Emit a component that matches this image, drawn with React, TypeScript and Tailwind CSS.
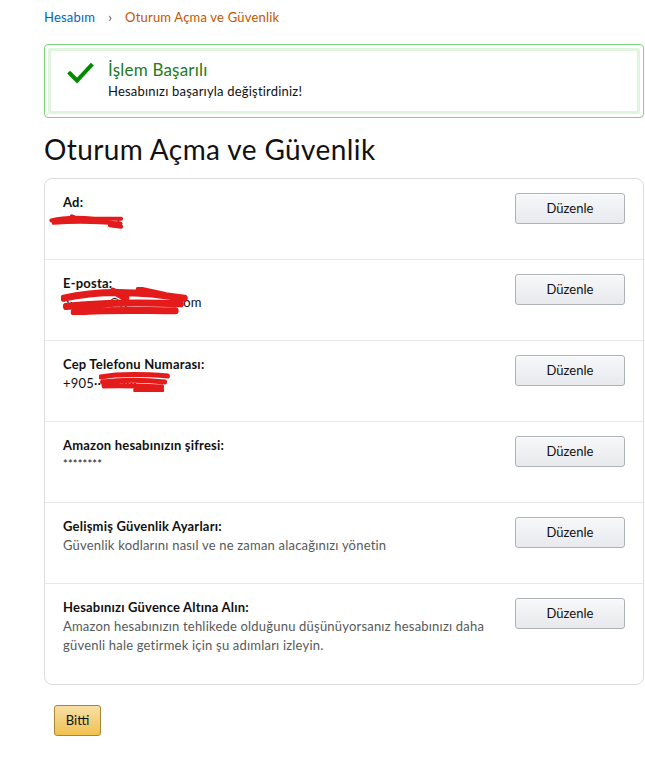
import React from "react";

const FONT = { fontFamily: "Lato, 'Liberation Sans', Arial, sans-serif" };

function Scribble({ d, className }: { d: string; className: string }) {
  return (
    <svg className={"pointer-events-none absolute " + className} viewBox="0 0 100 20" preserveAspectRatio="none" fill="none">
      <path d={d} stroke="#e31b1b" strokeWidth="5" strokeLinecap="round" strokeLinejoin="round" />
    </svg>
  );
}

function EditButton() {
  return (
    <button className="h-[31px] w-[110px] shrink-0 rounded-[3px] border border-[#adb1b8] bg-gradient-to-b from-[#f7f8fa] to-[#e7e9ec] text-[13px] text-[#111] shadow-[0_1px_0_rgba(255,255,255,0.6)_inset]">
      Düzenle
    </button>
  );
}

type Row = { label: string; body: React.ReactNode; tall?: boolean };

function SettingRow({ label, body, tall, last }: Row & { last?: boolean }) {
  return (
    <div
      className={
        "flex items-start justify-between gap-4 pl-[18px] pr-[18px] pt-[14px] " +
        (tall ? "min-h-[100px]" : "min-h-[81px]") +
        (last ? "" : " border-b border-[#e7e7e7]")
      }
    >
      <div className="text-[13px] leading-[19px] tracking-[0.2px]">
        <div className="font-bold text-[#111]">{label}</div>
        {body}
      </div>
      <EditButton />
    </div>
  );
}

export default function App() {
  const rows: Row[] = [
    {
      label: "Ad:",
      body: (
        <div className="relative h-[19px] text-[#111]">
          <span className="ml-[54px]">s</span>
          <Scribble className="left-[-14px] top-[2px] h-[16px] w-[76px]" d="M3 8 C20 4 40 4 60 6 L95 6 M6 11 C30 9 60 9 94 12 M30 3 L40 8 M80 14 L95 16" />
        </div>
      ),
    },
    {
      label: "E-posta:",
      body: (
        <div className="relative h-[19px] text-[#0f1111]">
          <span>a···········@g·············.com</span>
          <Scribble className="left-[-2px] top-[-6px] h-[28px] w-[130px]" d="M2 8 C20 4 45 3 70 5 L95 8 M4 14 C30 11 60 11 92 12 M10 18 C35 16 60 17 88 17 M40 3 L50 8 M60 2 L80 6" />
        </div>
      ),
    },
    {
      label: "Cep Telefonu Numarası:",
      body: (
        <div className="relative h-[19px] text-[#111]">
          <span>+905··· ··· ····</span>
          <Scribble className="left-[36px] top-[-2px] h-[20px] w-[72px]" d="M2 5 C25 2 60 2 96 4 M4 10 C30 8 65 8 92 10 M6 14 C30 13 60 14 88 15 M50 18 L88 18" />
        </div>
      ),
    },
    {
      label: "Amazon hesabınızın şifresi:",
      body: <div className="text-[11px] leading-[17px] text-[#111]">********</div>,
    },
    {
      label: "Gelişmiş Güvenlik Ayarları:",
      body: <div className="text-[#565959]">Güvenlik kodlarını nasıl ve ne zaman alacağınızı yönetin</div>,
    },
    {
      label: "Hesabınızı Güvence Altına Alın:",
      tall: true,
      body: (
        <div className="text-[#565959]">
          Amazon hesabınızın tehlikede olduğunu düşünüyorsanız hesabınızı daha
          <br />
          güvenli hale getirmek için şu adımları izleyin.
        </div>
      ),
    },
  ];

  return (
    <div className="min-h-[757px] overflow-hidden bg-white pb-[20px] text-[#111]" style={FONT}>
      <div className="ml-[44px] w-[600px]">
        {/* breadcrumb */}
        <div className="flex items-center pt-[7px] text-[13px] leading-[20px] tracking-[0.2px]">
          <span className="text-[#0066c0]">Hesabım</span>
          <span className="mx-[13px] text-[#555]">›</span>
          <span className="text-[#c45500]">Oturum Açma ve Güvenlik</span>
        </div>

        {/* success alert */}
        <div className="mt-[17px] rounded-[4px] border border-[#7fd37f] p-[3px]">
          <div className="flex h-[66px] items-start rounded-[2px] border-[3px] border-[#dff5df] bg-white pl-[16px] pt-[7px]">
            <svg width="28" height="24" viewBox="0 0 28 24" className="mt-[3px] shrink-0">
              <path d="M3 12.5 L10 19.5 L24 4.5" fill="none" stroke="#008a00" strokeWidth="4" strokeLinecap="square" />
            </svg>
            <div className="ml-[13px] tracking-[0.2px]">
              <div className="text-[17px] leading-[24px] text-[#1e7b1e]">İşlem Başarılı</div>
              <div className="text-[13px] leading-[19px] text-[#111]">Hesabınızı başarıyla değiştirdiniz!</div>
            </div>
          </div>
        </div>

        <h1 className="mt-[13px] text-[28px] font-normal leading-[36px] tracking-[0.4px] text-[#111]">
          Oturum Açma ve Güvenlik
        </h1>

        <div className="mt-[11px] rounded-[8px] border border-[#ddd]">
          {rows.map((r, i) => (
            <SettingRow key={r.label} {...r} last={i === rows.length - 1} />
          ))}
        </div>

        <button className="ml-[10px] mt-[20px] h-[31px] w-[47px] rounded-[3px] border border-[#a88734] bg-gradient-to-b from-[#f7dfa5] to-[#f0c14b] text-[13px] text-[#111]">
          Bitti
        </button>
      </div>
    </div>
  );
}
